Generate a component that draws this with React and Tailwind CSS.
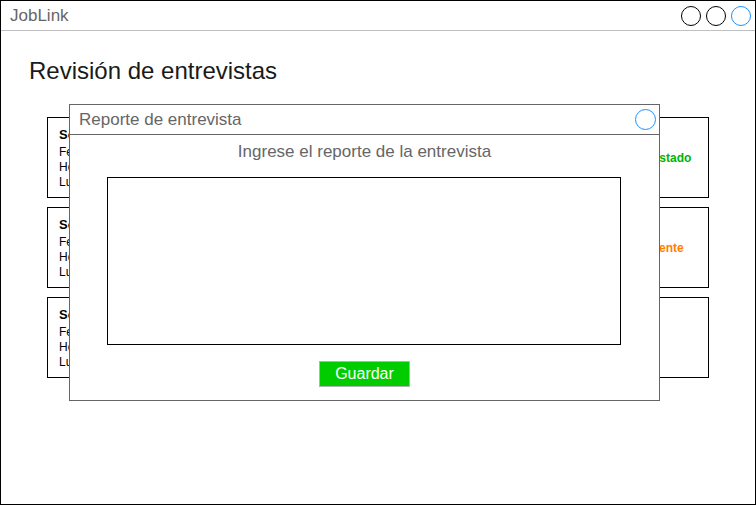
const interviews = [
  { status: "Entrevistado", color: "text-[#00b400]" },
  { status: "Pendiente", color: "text-[#ff8000]" },
  { status: "", color: "" },
];

function Circle({ blue, size = "w-[20px] h-[20px]" }) {
  return (
    <div
      className={`${size} rounded-full border ${
        blue ? "border-[#1e90ff]" : "border-black"
      }`}
    />
  );
}

export default function App() {
  return (
    <div className="w-[756px] h-[505px] bg-white border border-black font-['Liberation_Sans',Arial,sans-serif] relative overflow-hidden">
      <div className="h-[30px] border-b border-[#c0c0c0] flex items-center justify-between pl-[9px] pr-[4px]">
        <span className="text-[17px] text-[#666666]">JobLink</span>
        <div className="flex items-center gap-[5px]">
          <Circle />
          <Circle />
          <Circle blue />
        </div>
      </div>

      <div className="pt-[26px]">
        <h1 className="ml-[28px] text-[24px] leading-[28px] text-[#1a1a1a]">
          Revisión de entrevistas
        </h1>

        <div className="mt-[32px] ml-[46px] w-[662px] flex flex-col gap-[9px]">
          {interviews.map((it, i) => (
            <div
              key={i}
              className="h-[81px] border border-black flex items-center justify-between"
            >
              <div className="pl-[11px] text-[12px] leading-[15px] text-black">
                <div className="font-bold text-[13px] leading-[18px] mb-[1px]">Solicitud</div>
                <div>Fecha: 12/05</div>
                <div>Hora: 10:00</div>
                <div>Lugar: Sede</div>
              </div>
              <div className={`w-[106px] text-center text-[12px] font-bold ${it.color}`}>
                {it.status}
              </div>
            </div>
          ))}
        </div>
      </div>

      <div className="absolute left-[68px] top-[103px] w-[591px] h-[297px] bg-white border border-[#666666] flex flex-col">
        <div className="h-[30px] border-b border-[#666666] flex items-center justify-between pl-[9px] pr-[3px]">
          <span className="text-[17px] text-[#666666]">Reporte de entrevista</span>
          <Circle blue size="w-[21px] h-[21px]" />
        </div>
        <div className="text-center text-[17px] leading-[24px] text-[#666666] mt-[5px]">
          Ingrese el reporte de la entrevista
        </div>
        <div className="ml-[37px] mt-[13px] w-[514px] h-[168px] border border-black" />
        <div className="mx-auto mt-[16px] w-[91px] h-[26px] bg-[#00cc00] border border-[#b3b3b3] flex items-center justify-center text-white text-[16px]">
          Guardar
        </div>
      </div>
    </div>
  );
}
